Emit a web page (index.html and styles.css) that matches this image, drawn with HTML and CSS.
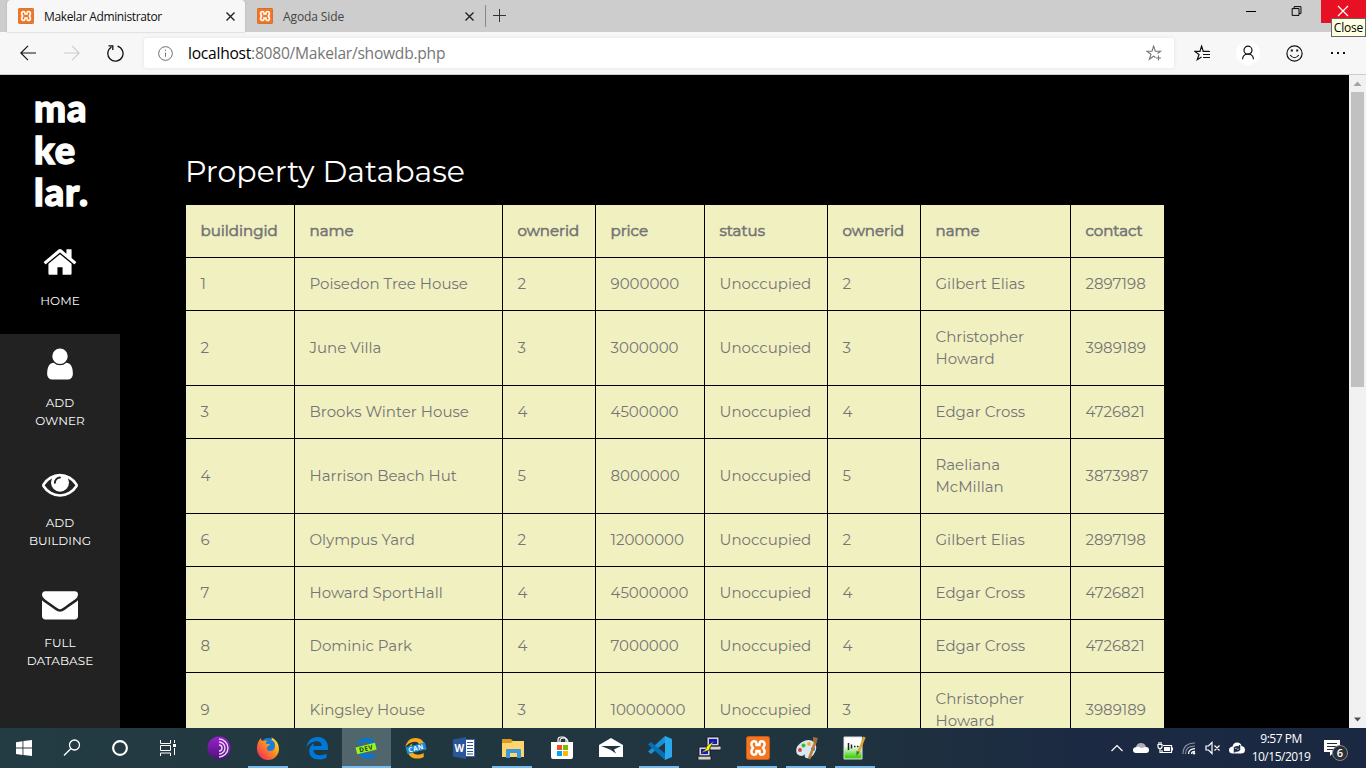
FILE: index.html
```html
<!DOCTYPE html>
<html lang="en">
<head>
<meta charset="utf-8">
<title>Makelar Administrator</title>
<link rel="stylesheet" href="styles.css">
</head>
<body>
<svg class="defs" width="0" height="0">
  <symbol id="xampp" viewBox="0 0 24 24"><rect x=".5" y=".5" width="23" height="23" rx="2" fill="#f37623" stroke="#c75b12"/><path d="M13.500 9H10.500V7.500Q10 5.300 8.400 5.300A3 3 0 0 0 5.400 8.300Q5.400 10 7 12Q5.400 14 5.400 15.700A3 3 0 0 0 8.400 18.700Q10 18.700 10.500 16.500V15H13.500V16.500Q14 18.700 15.600 18.700A3 3 0 0 0 18.600 15.700Q18.600 14 17 12Q18.600 10 18.600 8.300A3 3 0 0 0 15.600 5.300Q14 5.300 13.500 7.500Z" fill="none" stroke="#fff" stroke-width="2.500"/></symbol>
  <symbol id="edge" viewBox="0 0 24 24"><path fill="currentColor" d="M1.500 11C2.600 4.500 7 1 12.500 1C19 1 23 5.500 23 11.500V14H8.500C8.700 18 12 19.300 15 19.300C17.500 19.300 19.700 18.500 21.500 17.500V21.700C19.500 22.900 17 23.500 14 23.500C8 23.500 4.200 20 4.200 15C4.200 11.500 6 8.500 9.500 7C8.900 7.800 8.500 8.700 8.500 9.900H16.700C16.700 6.800 14.800 5.200 11.500 5.200C7.500 5.200 3.800 7.500 1.500 11Z"/></symbol>
</svg>

<header class="tabstrip">
  <div class="tab active">
    <svg class="favicon"><use href="#xampp"/></svg>
    <span class="tab-title">Makelar Administrator</span>
    <svg class="tab-close" viewBox="0 0 9 9"><path d="M.5.5l8 8M8.500.5l-8 8"/></svg>
  </div>
  <div class="tab idle">
    <svg class="favicon"><use href="#xampp"/></svg>
    <span class="tab-title agoda">Agoda Side</span>
    <svg class="tab-close" viewBox="0 0 9 9"><path d="M.5.5l8 8M8.500.5l-8 8"/></svg>
  </div>
  <svg class="new-tab" viewBox="0 0 13 13"><path d="M6.500 0v13M0 6.500h13"/></svg>
  <div class="window-controls">
    <svg class="min" viewBox="0 0 45 23"><path d="M20 11.500h10"/></svg>
    <svg class="restore" viewBox="0 0 45 23"><path d="M15.500 8.500h7v7h-7zM17.500 8.500v-2h7v7h-2"/></svg>
    <svg class="close" viewBox="0 0 45 23"><path d="M17 6l10 10M27 6L17 16"/></svg>
  </div>
  <div class="tooltip">Close</div>
</header>

<div class="toolbar">
  <div class="nav-buttons">
    <svg viewBox="0 0 16 16"><path d="M16 8H1M8 .8L.8 8L8 15.200"/></svg>
    <svg class="disabled" viewBox="0 0 16 16"><path d="M0 8h15M8 .8L15.200 8L8 15.200"/></svg>
    <svg class="reload" viewBox="0 0 17 17"><path d="M10.500 1.200A7.600 7.600 0 1 1 4.500 2M1.500.8H5.800V5"/></svg>
  </div>
  <div class="address">
    <svg class="info" viewBox="0 0 16 16"><circle cx="8" cy="8" r="7.300"/><path d="M8 7v4.500M8 4v1.300"/></svg>
    <span class="url"><b>localhost</b>:8080/Makelar/showdb.php</span>
    <svg class="fav-add" viewBox="0 0 17 17"><path d="M9.500 12.500L7.600 11.200L3.300 14.300L5 9.300L.8 6.200H6L7.600 1L9.300 6.200H14.500L11.500 8.500M12.500 10.500v5M10 13h5"/></svg>
  </div>
  <div class="tools">
    <svg class="favorites" viewBox="0 0 17 17"><path d="M7.500 12L3.300 14.700L5 9.500L.8 6.400H6L7.600 1L9.300 6.400H15M9 9.500h7M9 12.500h7M8.500 6.500h7.500"/></svg>
    <div class="profile"><svg viewBox="0 0 24 24"><circle cx="12" cy="9.200" r="4"/><path d="M6.500 18.200Q7 13 12 13Q17 13 17.500 18.200"/></svg></div>
    <svg class="smile" viewBox="0 0 17 17"><circle cx="8.500" cy="8.500" r="7.600"/><path d="M4.200 10Q8.500 15.500 12.800 10"/><path class="eyes" d="M4.800 5.600h2M10.200 5.600h2"/></svg>
    <svg class="more" viewBox="0 0 16 16"><path d="M1 8h2M7 8h2M13 8h2"/></svg>
  </div>
</div>

<main class="page">
  <nav class="sidebar">
    <div class="logo">ma<br>ke<br>lar.</div>
    <a class="item home"><svg viewBox="0 0 1792 1792"><path d="M1472 992v480q0 26-19 45t-45 19h-384v-384h-256v384h-384q-26 0-45-19t-19-45v-480q0-1 .5-3t.5-3l575-474 575 474q1 2 1 6zm223-69l-62 74q-8 9-21 11h-3q-13 0-21-7l-692-577-692 577q-12 8-24 7-13-2-21-11l-62-74q-8-10-7-23.500t11-21.500l719-599q32-26 76-26t76 26l244 204v-195q0-14 9-23t23-9h192q14 0 23 9t9 23v408l219 182q10 8 11 21.500t-7 23.500z"/></svg><span>HOME</span></a>
    <a class="item"><svg viewBox="0 0 1792 1792"><path d="M1536 1399q0 109-62.500 187t-150.500 78h-854q-88 0-150.500-78t-62.500-187q0-85 8.500-160.500t31.500-152 58.500-131 94-89 134.500-34.500q131 128 313 128t313-128q76 0 134.500 34.500t94 89 58.500 131 31.500 152 8.500 160.500zm-256-887q0 159-112.500 271.500t-271.500 112.500-271.500-112.500-112.500-271.500 112.500-271.500 271.500-112.500 271.500 112.500 112.500 271.500z"/></svg><span>ADD<br>OWNER</span></a>
    <a class="item"><svg viewBox="0 0 1792 1792"><path d="M1664 960q-152-236-381-353 61 104 61 225 0 185-131.500 316.500t-316.500 131.500-316.500-131.500-131.500-316.500q0-121 61-225-229 117-381 353 133 205 333.500 326.500t434.500 121.500 434.500-121.500 333.500-326.500zm-720-384q0-20-14-34t-34-14q-125 0-214.500 89.500t-89.500 214.500q0 20 14 34t34 14 34-14 14-34q0-86 61-147t147-61q20 0 34-14t14-34zm848 384q0 34-20 69-140 230-376.500 368.500t-499.500 138.500-499.500-139-376.500-368q-20-35-20-69t20-69q140-229 376.500-368t499.500-139 499.500 139 376.500 368q20 35 20 69z"/></svg><span>ADD<br>BUILDING</span></a>
    <a class="item"><svg viewBox="0 0 1792 1792"><path d="M1792 710v794q0 66-47 113t-113 47h-1472q-66 0-113-47t-47-113v-794q44 49 101 87 362 246 497 345 57 42 92.500 65.500t94.500 48 110 24.500h2q51 0 110-24.500t94.500-48 92.500-65.500q170-123 498-345 57-39 100-87zm0-294q0 79-49 151t-122 123q-376 261-468 325-10 7-42.500 31t-54 38.500-52 32.500-57.500 27-50 9h-2q-23 0-50-9t-57.500-27-52-32.500-54-38.500-42.500-31q-91-64-262-182.500t-205-142.500q-62-42-117-115.500t-55-136.500q0-78 41.500-130t118.500-52h1472q65 0 112.500 47t47.500 113z"/></svg><span>FULL<br>DATABASE</span></a>
  </nav>
  <section class="content">
    <h1>Property Database</h1>
    <table>
      <colgroup><col class="c1"><col class="c2"><col class="c3"><col class="c4"><col class="c5"><col class="c6"><col class="c7"><col class="c8"></colgroup>
      <tr><th>buildingid</th><th>name</th><th>ownerid</th><th>price</th><th>status</th><th>ownerid</th><th>name</th><th>contact</th></tr>
      <tr><td>1</td><td>Poisedon Tree House</td><td>2</td><td>9000000</td><td>Unoccupied</td><td>2</td><td>Gilbert Elias</td><td>2897198</td></tr>
      <tr><td>2</td><td>June Villa</td><td>3</td><td>3000000</td><td>Unoccupied</td><td>3</td><td>Christopher Howard</td><td>3989189</td></tr>
      <tr><td>3</td><td>Brooks Winter House</td><td>4</td><td>4500000</td><td>Unoccupied</td><td>4</td><td>Edgar Cross</td><td>4726821</td></tr>
      <tr><td>4</td><td>Harrison Beach Hut</td><td>5</td><td>8000000</td><td>Unoccupied</td><td>5</td><td>Raeliana McMillan</td><td>3873987</td></tr>
      <tr><td>6</td><td>Olympus Yard</td><td>2</td><td>12000000</td><td>Unoccupied</td><td>2</td><td>Gilbert Elias</td><td>2897198</td></tr>
      <tr><td>7</td><td>Howard SportHall</td><td>4</td><td>45000000</td><td>Unoccupied</td><td>4</td><td>Edgar Cross</td><td>4726821</td></tr>
      <tr><td>8</td><td>Dominic Park</td><td>4</td><td>7000000</td><td>Unoccupied</td><td>4</td><td>Edgar Cross</td><td>4726821</td></tr>
      <tr><td>9</td><td>Kingsley House</td><td>3</td><td>10000000</td><td>Unoccupied</td><td>3</td><td>Christopher Howard</td><td>3989189</td></tr>
    </table>
  </section>
  <div class="scrollbar">
    <svg viewBox="0 0 17 17"><path fill="#a3a3a3" d="M8.500 6.500L12.500 11H4.500z"/></svg>
    <div class="thumb"></div>
    <svg viewBox="0 0 17 17"><path fill="#505050" d="M8.500 10.500L12 6.500H5z"/></svg>
  </div>
</main>

<footer class="taskbar">
  <div class="system">
    <svg viewBox="0 0 24 24"><path fill="#fff" d="M4 6.200l6.500-1v6.400H4zM11.400 5L20 4v7.600h-8.600zM4 12.500h6.500V19L4 18zM11.400 12.500H20V20l-8.600-1z"/></svg>
    <svg viewBox="0 0 24 24"><g fill="none" stroke="#fff" stroke-width="1.300"><circle cx="14.500" cy="9" r="5"/><path d="M10.700 12.700L4 19.500"/></g></svg>
    <svg viewBox="0 0 24 24"><circle cx="12" cy="12" r="6.900" fill="none" stroke="#fff" stroke-width="2.100"/></svg>
    <svg viewBox="0 0 24 24"><path fill="none" stroke="#fff" d="M4.500 4v3.500h10V4M4.500 20v-3h10v3M4.500 9.500h10v5h-10zM18.500 4v3M18.500 12v7"/><path fill="#fff" d="M17 8h3v3h-3z"/></svg>
  </div>
  <div class="apps">
    <div class="app"><svg viewBox="0 0 24 24"><defs><linearGradient id="tor" x2="0" y2="1"><stop stop-color="#9b20d0"/><stop offset="1" stop-color="#4b1475"/></linearGradient></defs><circle cx="12" cy="12" r="11.500" fill="url(#tor)"/><g fill="none" stroke="#ead5f4" stroke-width="1.400"><path d="M12 3a9 9 0 0 1 0 18M12 6a6 6 0 0 1 0 12M12 9a3 3 0 0 1 0 6"/></g></svg></div>
    <div class="app open"><svg viewBox="0 0 24 24"><defs><linearGradient id="fx" x1="1" x2="0" y2="1"><stop stop-color="#fff44f"/><stop offset=".4" stop-color="#ff9a18"/><stop offset="1" stop-color="#ef1768"/></linearGradient></defs><circle cx="12.500" cy="10.500" r="8.500" fill="#1680d9"/><path fill="url(#fx)" d="M15 1q8 4 8 12a11 11 0 0 1-22 0Q.8 6 5 2q0 3 2 3 2-1 4 0-2 2-1 3h4q-1 2-3 3-1 4 3 4 5 0 5-6 0-4-4-5 2-1 0-3z"/></svg></div>
    <div class="app"><svg class="blue"><use href="#edge"/></svg></div>
    <div class="app open current"><svg viewBox="0 0 24 24" class="blue"><use href="#edge" x="1" y="1" width="22" height="22"/><g transform="rotate(-14 12 12)"><rect x="2" y="9" width="20" height="7" fill="#9df21b"/><text x="12" y="14.900" text-anchor="middle" class="ribbon">DEV</text></g></svg></div>
    <div class="app"><svg viewBox="0 0 24 24" class="amber"><use href="#edge" x="1" y="1" width="22" height="22"/><g transform="rotate(-14 12 12)"><rect x="3" y="9" width="20" height="7" fill="#168bd5"/><text x="13" y="14.900" text-anchor="middle" class="ribbon light">CAN</text></g></svg></div>
    <div class="app"><svg viewBox="0 0 24 24"><path fill="#fff" stroke="#3e67ad" d="M10 3.500h12.500v17H10z"/><path stroke="#2b579a" d="M15 6.500h6M15 9.500h6M15 12.500h6M15 15.500h6M15 18h6"/><path fill="#2b579a" d="M1 3.500L14 1v22L1 20.500z"/><text x="7.300" y="16" text-anchor="middle" class="word">W</text></svg></div>
    <div class="app open"><svg viewBox="0 0 24 24"><path fill="#d79b26" d="M1 3h9l2 2h10v5H1z"/><path fill="#ffd66b" d="M1 7h9l2-2h11v16H1z"/><path fill="#3b98dc" d="M5 22v-8q0-1 1-1h13q1 0 1 1v8h-4v-5H9v5z"/></svg></div>
    <div class="app"><svg viewBox="0 0 24 24"><path fill="none" stroke="#fff" stroke-width="1.200" d="M8 7V4q0-3 3-3h2q3 0 3 3v3M10 7V5q0-3 4-3 4 0 4 5"/><path fill="#fff" d="M1 6h22v15q0 2-2 2H3q-2 0-2-2z"/><path fill="#f25022" d="M7 9h5v5H7z"/><path fill="#7fba00" d="M13 9h5v5h-5z"/><path fill="#00a4ef" d="M7 15h5v5H7z"/><path fill="#ffb900" d="M13 15h5v5h-5z"/></svg></div>
    <div class="app"><svg viewBox="0 0 24 24"><path fill="#fff" d="M0 9L12 2l12 7v12H0z"/><path fill="#203743" d="M2 10h20l-7 3.500 2 4-6-4z"/></svg></div>
    <div class="app open"><svg viewBox="0 0 24 24"><path fill="#1c91d8" d="M17 0v6.500L3 18 0 15.500z"/><path fill="#0870b7" d="M0 8.500L3 6l14 11.500V24z"/><path fill="#29a9ed" d="M17 0l7 3v18l-7 3z"/></svg></div>
    <div class="app"><svg viewBox="0 0 24 24"><g fill="#d2d2d2" stroke="#111" stroke-width=".8"><path d="M10 1h12v9H10zM12 10h12v4H10zM2 11h11v9H2zM1 20h13v4H1z"/></g><path fill="#1118cc" d="M12 3h8v5h-8zM4 13h7v5H4z"/><path fill="#ff0" stroke="#332" stroke-width=".5" d="M17 5l-7 5-1 3-5 4 8-3 1-3z"/></svg></div>
    <div class="app open"><svg><use href="#xampp"/></svg></div>
    <div class="app open"><svg viewBox="0 0 24 24"><path fill="#d6e9f1" d="M2 18Q-1 11 7 6q7-4 12 0 4 4 1 10-3 7-9 6-2-1-1-4-3 4-8 0z"/><circle cx="5" cy="14" r="1.900" fill="#d83b3b"/><circle cx="8.500" cy="9.500" r="2" fill="#45b52c"/><circle cx="14" cy="8" r="1.900" fill="#efb12c"/><circle cx="18" cy="13" r="2" fill="#297bc5"/><path stroke="#c57831" stroke-width="2.600" d="M21 4l-7 19"/><path fill="#a5693a" d="M18 1l5 1-2 5-3-1z"/></svg></div>
    <div class="app open"><svg viewBox="0 0 24 24"><defs><linearGradient id="np" x2="0" y2="1"><stop offset=".4" stop-color="#fff"/><stop offset=".9" stop-color="#42d414"/></linearGradient></defs><path fill="url(#np)" stroke="#ddd" d="M1 1h18v22H1z"/><path stroke="#222" d="M5.500 7v7M8.500 8.500v4M11 10.500h1.500M14 10.500h1.500" fill="none" stroke-width="1.500"/><path stroke="#dca52e" stroke-width="2.400" d="M21.500 1l-6 15"/><path fill="#653" d="M13.500 15l3 1-3 4z"/></svg></div>
  </div>
  <div class="tray">
    <svg viewBox="0 0 16 16"><path fill="none" stroke="#fff" stroke-width="1.200" d="M2.500 11L8 5.500l5.500 5.500"/></svg>
    <svg viewBox="0 0 16 16"><path fill="#aaafb8" d="M3 7q1-4 5-4 4 0 5 4l-5 5z"/><path fill="#fff" d="M3 13q-3 0-3-3 0-3 4-3 2-1 4 1l5-1q3 0 3 3t-3 3z"/></svg>
    <svg viewBox="0 0 16 16"><path fill="none" stroke="#fff" stroke-width="1.200" d="M6 5.500h8.500v7H5V10M1 4.500h4v2q0 2-2 2t-2-2zM2 2v2M4 2v2M3 8.500v4h2M15.500 7.500v3"/><path fill="#fff" d="M7 7h6v4H7z"/></svg>
    <svg viewBox="0 0 16 16"><g fill="none" stroke-width="1.200"><path stroke="#8c95a5" d="M2 14Q2 3 14 3M4.500 14Q4.500 6 14 6"/><path stroke="#fff" d="M7.500 14Q7.500 9 14 8.700M10.500 14q0-2.500 3.500-2.600"/></g><circle cx="13" cy="13.300" r="1.200" fill="#fff"/></svg>
    <svg viewBox="0 0 16 16"><path fill="none" stroke="#fff" stroke-width="1.200" d="M1 6h2.500L7 2.500v11L3.500 10H1zM9.500 5.500l5 5M14.500 5.500l-5 5"/></svg>
    <svg viewBox="0 0 16 16" class="sync"><path fill="#fff" d="M4 13.500q-4 0-4-3.500 0-3 3.500-3.500Q4.500 2.500 8 2.500q4 0 4.500 3.500 3.500.5 3.500 4t-4 3.500z"/><path fill="none" stroke="#1b2b42" stroke-width="1.500" d="M5 8.500q2-3 5-1M11 9q-2 3-5 1.500M10.500 5v3h-3M5.500 12.500v-3h3"/></svg>
    <div class="clock"><span>9:57 PM</span><span class="date">10/15/2019</span></div>
    <div class="notifications"><svg viewBox="0 0 16 16"><path fill="#fff" d="M0 0h16v12h-6l-4 4v-4H0z"/><path stroke="#1b2b42" d="M3 3.500h10M3 6.500h10M3 9.500h7"/></svg><span class="badge">6</span></div>
  </div>
</footer>
</body>
</html>
```
FILE: styles.css
```css
* { box-sizing: border-box; }
body { margin: 0; width: 1366px; height: 768px; overflow: hidden; display: flex; flex-direction: column; background: #000; font-family: "Open Sans", "Noto Sans", sans-serif; }
svg { display: block; flex: none; }
.defs { position: absolute; }

.tabstrip { position: relative; height: 32px; flex: none; display: flex; background: #cdcdcd; padding-left: 7px; }
.tab { display: flex; align-items: center; height: 32px; font-size: 12px; padding-left: 11px; }
.tab.active { width: 238px; background: #f7f7f7; border-radius: 4px 4px 0 0; color: #111; box-shadow: 0 0 2px #aaa; }
.tab.idle { width: 241px; height: 22px; margin-top: 5px; padding-left: 12px; border-right: 1px solid #888; color: #444; }
.favicon { width: 16px; height: 16px; }
.tab-title { margin-left: 10px; flex: 1; letter-spacing: -0.37px; white-space: nowrap; }
.tab-title.agoda { letter-spacing: -0.1px; }
.tab-close { width: 9px; height: 9px; margin-right: 10px; fill: none; stroke: #222; stroke-width: 1.4; }
.tab.idle .tab-close { margin-right: 11px; }
.new-tab { width: 13px; height: 13px; margin: 9px 0 0 7px; stroke: #333; }
.window-controls { margin-left: auto; display: flex; height: 23px; }
.window-controls svg { width: 45px; height: 23px; fill: none; stroke: #000; }
.window-controls .min { margin-right: 6px; }
.window-controls .restore { width: 44px; }
.window-controls .close { background: #e81123; stroke: #fff; stroke-width: 1.2; }
.tooltip { position: absolute; z-index: 2; right: 0; top: 18px; width: 35px; height: 19px; background: #ffffe1; border: 1px solid #666; font-size: 12px; line-height: 17px; text-align: center; letter-spacing: -0.2px; color: #000; }

.toolbar { height: 43px; flex: none; display: flex; align-items: center; background: #f7f7f7; border-bottom: 1px solid #ccc; }
.nav-buttons { width: 144px; padding-left: 20px; display: flex; gap: 28px; }
.nav-buttons svg { width: 16px; height: 16px; fill: none; stroke: #111; stroke-width: 1.2; }
.nav-buttons .disabled { stroke: #ccc; }
.nav-buttons .reload { width: 17px; height: 17px; stroke-width: 1.3; margin-left: -1px; }
.address { width: 1030px; height: 30px; display: flex; align-items: center; background: #fff; border-radius: 3px; box-shadow: 0 0 4px #e4e4e4; padding: 0 11px 0 14px; }
.info { width: 15px; height: 15px; fill: none; stroke: #666; }
.url { flex: 1; margin-left: 15px; font-size: 15.6px; color: #767676; letter-spacing: -0.25px; }
.url b { font-weight: 400; color: #000; }
.fav-add { width: 17px; height: 17px; fill: none; stroke: #777; stroke-width: 1.1; }
.tools { display: flex; align-items: center; padding-left: 20px; }
.tools svg { fill: none; stroke: #111; stroke-width: 1.2; }
.favorites { width: 17px; height: 17px; }
.profile { width: 24px; height: 24px; margin-left: 25px; border-radius: 50%; background: #fff; }
.smile { width: 17px; height: 17px; margin-left: 26px; }
.tools .eyes { stroke-width: 2; }
.more { width: 16px; height: 16px; margin-left: 27px; }
.tools .more { stroke-width: 2; }

.page { height: 653px; flex: none; display: flex; overflow: hidden; background: #000; }
.sidebar { width: 120px; background: #222; color: #fff; font-family: Montserrat, Inter, sans-serif; }
.logo { height: 157px; background: #000; padding: 11px 0 0 34px; font: 900 38px/42px Lato, sans-serif; letter-spacing: 1px; -webkit-text-stroke: 1.4px #fff; }
.item { display: flex; flex-direction: column; align-items: center; height: 120px; padding-top: 12px; gap: 12px; font-size: 12px; line-height: 18px; text-align: center; letter-spacing: 0.05px; font-weight: 450; }
.item.home { height: 102px; background: #000; }
.item svg { width: 36px; height: 36px; fill: #fff; }
.content { width: 1229px; padding: 74px 0 0 65px; font-family: Montserrat, Inter, sans-serif; }
h1 { margin: 0; height: 55px; font-size: 30px; line-height: 45px; font-weight: 400; color: #fff; }
table { width: 980px; table-layout: fixed; border-spacing: 1px; font-size: 15px; line-height: 22px; color: #757575; }
th, td { padding: 15px 13px 15px 14.5px; background: #f1f0c1; text-align: left; font-weight: 400; }
th { -webkit-text-stroke: 0.6px #757575; }
.c1 { width: 108px; } .c2 { width: 207px; } .c3, .c6 { width: 92px; } .c4 { width: 108px; } .c5 { width: 122px; } .c7 { width: 149px; } .c8 { width: 93px; }
.scrollbar { width: 17px; background: #f1f1f1; display: flex; flex-direction: column; align-items: center; }
.scrollbar svg { width: 17px; height: 17px; }
.thumb { width: 13px; height: 295px; background: #c1c1c1; margin-bottom: auto; }

.taskbar { height: 40px; flex: none; display: flex; background: linear-gradient(90deg, #233b42, #20343f 60%, #1b2942 80%, #1a2841); color: #fff; }
.system { display: flex; width: 194.8px; align-items: center; }
.system svg { width: 24px; height: 24px; margin: 0 12px; }
.apps { display: flex; }
.app { width: 48.95px; height: 40px; display: flex; align-items: center; justify-content: center; position: relative; }
.app svg { width: 24px; height: 24px; }
.app.open::after { content: ""; position: absolute; left: 4px; bottom: 0; width: 40px; height: 2px; background: #76b9ed; }
.app.current { background: #50656c; }
.app.current::after { left: 0; width: 100%; }
.blue { color: #0078d7; }
.amber { color: #f7a81b; }
.ribbon { font: 700 6.5px "Open Sans", sans-serif; letter-spacing: 0.6px; fill: #17351b; }
.ribbon.light { fill: #fff; }
.word { font: 700 10px "Open Sans", sans-serif; fill: #fff; }
.tray { margin-left: auto; width: 257px; display: flex; align-items: center; }
.tray > svg { width: 16px; height: 16px; margin-right: 8px; }
.tray > .sync { margin: 0 7px 0 0; }
.clock { display: flex; flex-direction: column; align-items: center; width: 60px; font-size: 12px; line-height: 18px; letter-spacing: -0.5px; white-space: nowrap; margin-left: -1px; }
.notifications { position: relative; margin-left: 13px; }
.notifications > svg { width: 16px; height: 16px; }
.badge { position: absolute; left: 8px; top: 5px; width: 16px; height: 16px; border: 1px solid #888; border-radius: 50%; background: #2b2f36; font-size: 11px; line-height: 14px; text-align: center; font-weight: 600; }
```
